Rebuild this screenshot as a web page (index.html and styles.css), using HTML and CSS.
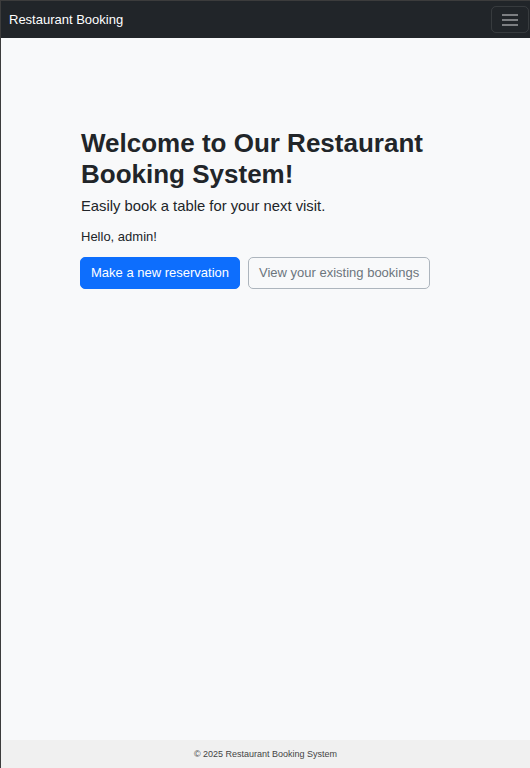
FILE: index.html
```html
<!DOCTYPE html>
<html lang="en">
<head>
<meta charset="utf-8">
<title>Restaurant Booking</title>
<link rel="stylesheet" href="styles.css">
</head>
<body>
<div class="frame">
  <nav class="navbar">
    <a class="brand" href="#">Restaurant Booking</a>
    <button class="toggler" aria-label="Toggle navigation">
      <svg width="18" height="14" viewBox="0 0 18 14"><path d="M1 2h16M1 7h16M1 12h16" stroke="rgba(255,255,255,0.55)" stroke-width="1.6" fill="none"/></svg>
    </button>
  </nav>
  <main class="main">
    <div class="hero">
      <h1 class="title">Welcome to Our Restaurant Booking System!</h1>
      <p class="lead">Easily book a table for your next visit.</p>
      <p class="hello">Hello, admin!</p>
      <div class="actions">
        <a class="btn btn-primary" href="#">Make a new reservation</a>
        <a class="btn btn-outline" href="#">View your existing bookings</a>
      </div>
    </div>
  </main>
  <footer class="footer">© 2025 Restaurant Booking System</footer>
</div>
</body>
</html>
```
FILE: styles.css
```css
* { box-sizing: border-box; }
html, body { margin: 0; padding: 0; height: 100%; }
body {
  font-family: "Liberation Sans", Arial, sans-serif;
  background: #f8f9fa;
  color: #212529;
}
.frame {
  min-height: 100vh;
  display: flex;
  flex-direction: column;
  border-left: 1px solid #3c3c3c;
  border-top: 1px solid #3c3c3c;
}
.navbar {
  background: #212529;
  height: 37px;
  display: flex;
  align-items: center;
  justify-content: space-between;
  padding: 0 1px 0 8px;
}
.brand {
  color: #fff;
  text-decoration: none;
  font-size: 13px;
}
.toggler {
  width: 38px;
  height: 27px;
  background: transparent;
  border: 1px solid rgba(255,255,255,0.1);
  border-radius: 5px;
  display: flex;
  align-items: center;
  justify-content: center;
  padding: 0;
}
.main {
  flex: 1;
  padding: 90px 0 0 79px;
}
.hero { max-width: 380px; }
.title {
  font-size: 26px;
  line-height: 1.2;
  font-weight: 700;
  margin: 0 0 8px 1px;
}
.lead {
  font-size: 14.8px;
  margin: 0 0 15px 1px;
}
.hello {
  font-size: 13px;
  margin: 0 0 13px 1px;
}
.actions { display: flex; gap: 8px; }
.btn {
  display: inline-block;
  white-space: nowrap;
  font-size: 13px;
  line-height: 20px;
  padding: 5px 10px;
  border-radius: 5px;
  text-decoration: none;
  border: 1px solid transparent;
}
.btn-primary { background: #0d6efd; color: #fff; border-color: #0d6efd; }
.btn-outline { color: #6c757d; border-color: #adb5bd; background: transparent; }
.footer {
  background: #f0f0f0;
  height: 28px;
  display: flex;
  align-items: center;
  justify-content: center;
  font-size: 9px;
  color: #444;
}
```
